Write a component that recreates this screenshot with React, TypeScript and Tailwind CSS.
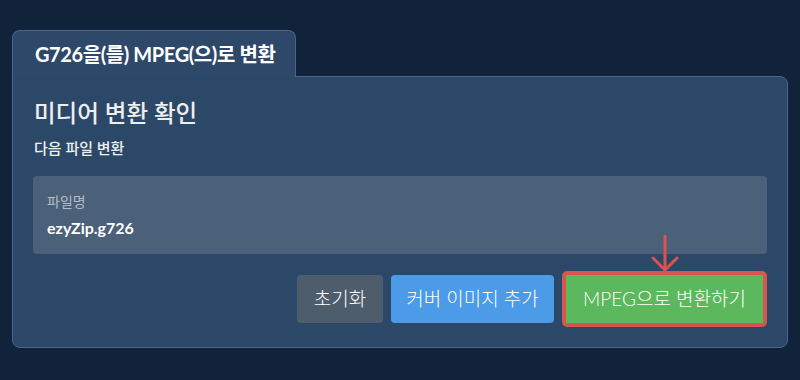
import React from "react";

const font = { fontFamily: 'Lato, "Noto Sans CJK KR", sans-serif' };

export default function App() {
  return (
    <div className="w-[800px] h-[380px] bg-[#10233a] pt-[30px] px-[12px] text-white" style={font}>
      <div className="flex flex-col w-[776px]">
        <div className="relative z-10 -mb-px self-start w-[284px] h-[47px] bg-[#2d4869] border border-b-0 border-[#4a6686] rounded-t-[8px] pl-[22px] flex items-center">
          <span className="text-[20px] font-bold tracking-[-0.4px] text-white">G726을(를) MPEG(으)로 변환</span>
        </div>
        <div className="bg-[#2c4868] border border-[#4a6686] rounded-b-[8px] rounded-tr-[8px] px-[20px] pt-[21px] pb-[20px]">
          <div className="text-[23.5px] font-medium leading-[30px] text-[#eeeeee] pl-px">미디어 변환 확인</div>
          <div className="text-[15px] font-medium leading-[20px] mt-[10px] pl-px text-[#f0f0f0]">다음 파일 변환</div>
          <div className="mt-[18px] h-[78px] bg-[#4b6079] rounded-[4px] px-[14px] pt-[17px]">
            <div className="text-[14px] leading-[18px] text-[#b3bcc6]">파일명</div>
            <div className="text-[16px] font-bold leading-[20px] mt-[7px] text-white">ezyZip.g726</div>
          </div>
          <div className="mt-[17px] flex justify-end items-center gap-[8px]">
            <button className="h-[48px] w-[86px] rounded-[4px] bg-[#4e5d6c] text-[19px] font-light text-white">초기화</button>
            <button className="h-[48px] w-[163px] rounded-[4px] bg-[#4c9be8] text-[19px] font-light text-white">커버 이미지 추가</button>
            <div className="relative border-[4px] border-[#d9534f] rounded-[5px]">
              <svg className="absolute left-1/2 -translate-x-1/2 -top-[40px]" width="30" height="38" viewBox="0 0 30 38">
                <path d="M15 1 V35 M3 23 L15 35 L27 23" stroke="#d9534f" strokeWidth="3" fill="none" strokeLinecap="round" strokeLinejoin="round" />
              </svg>
              <button className="h-[48px] w-[197px] bg-[#5cb85c] text-[19px] font-light text-white block whitespace-nowrap">MPEG으로 변환하기</button>
            </div>
          </div>
        </div>
      </div>
    </div>
  );
}
